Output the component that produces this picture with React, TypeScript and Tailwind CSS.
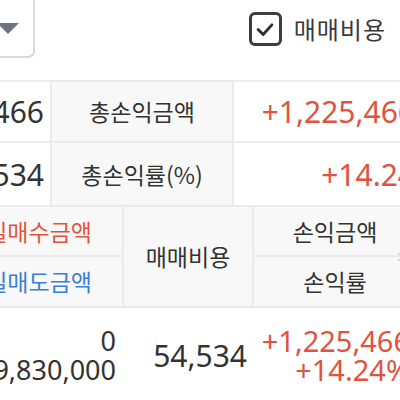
import React from "react";

const RED = "text-[#e0533f]";
const NUM = "font-['Noto_Sans','Noto_Sans_CJK_KR',sans-serif]";

export default function App() {
  return (
    <div className="w-[400px] h-[400px] overflow-hidden bg-white text-[#333] font-['Noto_Sans_CJK_KR','Noto_Sans',sans-serif]">
      {/* top bar */}
      <div className="h-[80px] flex items-start justify-between">
        <div className="-ml-[86px] -mt-[8px] w-[121px] h-[66px] shrink-0 rounded-[7px] border-2 border-[#d9d9d9] flex items-start justify-end pt-[29px] pr-[14px]">
          <svg width="22" height="12" viewBox="0 0 22 12">
            <path d="M0 0 H22 L11 11 Z" fill="#6f7480" />
          </svg>
        </div>
        <div className="mt-[12px] mr-[14px] flex items-center gap-[12px]">
          <div className="w-[33px] h-[34px] rounded-[6px] border-[3px] border-[#3d3d3d] flex items-center justify-center">
            <svg width="22" height="22" viewBox="0 0 24 24">
              <path d="M4.5 12.5 L10 18 L19.5 7.5" fill="none" stroke="#2f2f2f" strokeWidth="3.2" strokeLinecap="round" strokeLinejoin="round" />
            </svg>
          </div>
          <span className="text-[24px] leading-none tracking-[1px] text-[#3a3a3a]">매매비용</span>
        </div>
      </div>

      <div className="w-[416px] border-t-2 border-[#ebebeb]">
        {/* row 1 */}
        <div className="grid grid-cols-[52px_182px_182px] h-[61px] border-b-2 border-[#ebebeb]">
          <div className={`flex items-center justify-end pr-[6px] border-r-2 border-[#ebebeb] overflow-hidden whitespace-nowrap text-[30px] ${NUM}`}>+1,225,466</div>
          <div className="flex items-center justify-center bg-[#f8f8f8] border-r-2 border-[#ebebeb] text-[23px]">총손익금액</div>
          <div className={`flex items-center justify-end pr-[1px] whitespace-nowrap text-[30px] ${NUM} ${RED}`}>+1,225,466</div>
        </div>
        {/* row 2 */}
        <div className="grid grid-cols-[52px_182px_182px] h-[64px] border-b-2 border-[#ebebeb]">
          <div className={`flex items-center justify-end pr-[6px] border-r-2 border-[#ebebeb] overflow-hidden whitespace-nowrap text-[30px] ${NUM}`}>54,534</div>
          <div className="flex items-center justify-center bg-[#f8f8f8] border-r-2 border-[#ebebeb] text-[23px]">총손익률(%)</div>
          <div className={`flex items-center justify-end pr-[1px] whitespace-nowrap text-[30px] ${NUM} ${RED}`}>+14.24</div>
        </div>
        {/* header block */}
        <div className="grid grid-cols-[124px_130px_162px] bg-[#f8f8f8] border-b-2 border-[#ebebeb]">
          <div className="flex flex-col border-r-2 border-[#ebebeb]">
            <div className="h-[50px] flex items-center justify-end pr-[30px] whitespace-nowrap border-b-2 border-[#ebebeb] text-[23px] text-[#e0533f]">실매수금액</div>
            <div className="h-[49px] flex items-center justify-end pr-[30px] whitespace-nowrap text-[23px] text-[#3a7fd6]">실매도금액</div>
          </div>
          <div className="flex items-center justify-center border-r-2 border-[#ebebeb] text-[23px]">매매비용</div>
          <div className="flex flex-col">
            <div className="h-[50px] flex items-center justify-center border-b-2 border-[#ebebeb] text-[23px] relative">
              손익금액
              <svg className="absolute right-[13px] bottom-[-7px]" width="6" height="10" viewBox="0 0 6 10">
                <path d="M1 1 L5 5 L1 9" fill="none" stroke="#c8c8c8" strokeWidth="1.2" />
              </svg>
            </div>
            <div className="h-[49px] flex items-center justify-center text-[23px]">손익률</div>
          </div>
        </div>
        {/* data row */}
        <div className={`grid grid-cols-[124px_130px_162px] h-[94px] ${NUM}`}>
          <div className="flex flex-col items-end justify-center pr-[8px] overflow-hidden whitespace-nowrap text-[27px] leading-[29px]">
            <span>0</span>
            <span>9,830,000</span>
          </div>
          <div className="flex items-center justify-end pr-[7px] text-[30px]">54,534</div>
          <div className={`flex flex-col items-end justify-center pr-[6px] whitespace-nowrap text-[29px] leading-[29px] ${RED}`}>
            <span>+1,225,466</span>
            <span>+14.24%</span>
          </div>
        </div>
      </div>
    </div>
  );
}
